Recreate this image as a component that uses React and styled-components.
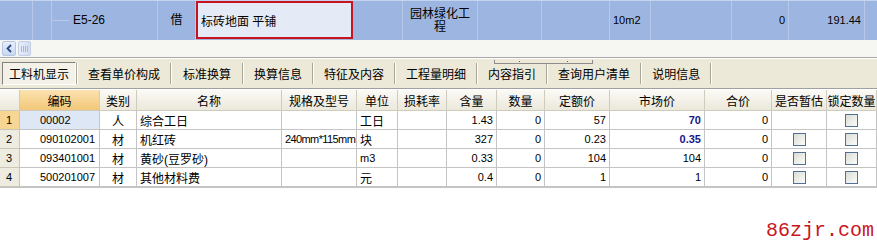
import React from 'react';
import styled, { createGlobalStyle } from 'styled-components';

const GlobalStyle = createGlobalStyle`
  html, body { margin: 0; padding: 0; background: #fff; }
  body { font-family: "Liberation Sans", "Noto Sans CJK SC", sans-serif; font-size: 12px; color: #000; }
`;

const Page = styled.div`
  width: 877px;
  height: 246px;
  display: flex;
  flex-direction: column;
  overflow: hidden;
  background: #fff;
`;

// ---------- upper grid row ----------
const TopRow = styled.div`
  display: grid;
  grid-template-columns: 33px 19px 106px 38px 157px 50px 75px 64px 68px 41px 81px 57px 76px 13px;
  height: 40px;
  background: #9db6e1;
  border-top: 1px solid #c4d3ee;
  box-sizing: border-box;
`;

const TopCell = styled.div`
  border-right: 1px solid #b7c8e8;
  display: flex;
  align-items: center;
  justify-content: ${p => p.$align || 'flex-start'};
  padding: 0 ${p => p.$pad ?? 3}px;
  font-size: ${p => (p.$num ? '11px' : '12px')};
  text-align: center;
  line-height: 13px;
  overflow: hidden;
`;

const TreeLine = styled.span`
  width: 17px;
  height: 1px;
  background: #b9c9e6;
  margin-right: 4px;
`;

const EditCell = styled.div`
  border: 2px solid #c8141e;
  background: #e4ebf7;
  display: flex;
  align-items: center;
  padding: 0 3px;
  font-size: 12px;
  box-sizing: border-box;
  margin: 0 0 1px 0;
`;

const ScrollRow = styled.div`
  height: 17px;
  background: #f6f6f2;
  display: flex;
  align-items: center;
  gap: 2px;
  padding-left: 2px;
  border-bottom: 1px solid #a9a9a9;
`;

const ScrollBtn = styled.div`
  width: 14px;
  height: 15px;
  box-sizing: border-box;
  border: 1px solid #b7c6e4;
  border-radius: 2px;
  background: linear-gradient(#e7eefb, #c9d8f3);
  display: flex;
  align-items: center;
  justify-content: center;
`;

const Grip = styled.div`
  width: 13px;
  height: 15px;
  box-sizing: border-box;
  border: 1px solid #c3cfe6;
  border-radius: 2px;
  background: linear-gradient(90deg, #e6ecf8, #d3ddf2);
  display: flex;
  align-items: center;
  justify-content: center;
  gap: 1px;
  & > i { width: 1px; height: 6px; background: #a9b8d6; }
`;

// ---------- tabs ----------
const TabBar = styled.div`
  height: 29px;
  background: #ece9d8;
  display: flex;
  align-items: center;
  padding-left: 2px;
  border-top: 1px solid #fff;
  border-bottom: 1px solid #a0a0a0;
  position: relative;
`;

const Tab = styled.div`
  height: 23px;
  box-sizing: border-box;
  display: flex;
  align-items: center;
  padding: 0 ${p => p.$pad}px;
  font-size: 12px;
  ${p => p.$active && `
    border-top: 1px solid #808080;
    border-left: 1px solid #808080;
    border-bottom: 1px solid #fff;
    border-right: 1px solid #fff;
    background: #f4f2e8;
  `}
`;

const TabSep = styled.div`
  width: 1px;
  height: 21px;
  background: #a7a59a;
  border-right: 1px solid #fff;
`;

const Splitter = styled.div`
  position: absolute;
  left: 494px;
  top: 1px;
  width: 99px;
  height: 4px;
  border: 1px solid #8d8d8d;
  border-top: none;
  box-sizing: border-box;
  display: flex;
  justify-content: space-around;
  align-items: center;
  & > i { width: 1px; height: 1px; background: #555; }
`;

// ---------- lower grid ----------
const COLS = '20px 80px 37px 145px 75px 41px 49px 50px 48px 65px 95px 67px 55px 50px';

const Table = styled.div`
  margin-top: 1px;
  display: grid;
  grid-template-columns: ${COLS};
  grid-auto-rows: 19px;
  grid-template-rows: 21px;
  border-bottom: 1px solid #c4c4c4;
`;

const Head = styled.div`
  background: ${p => (p.$hot ? 'linear-gradient(#fbe3b0, #f3c779)' : 'linear-gradient(#fbfaf6, #ebe8db)')};
  border-right: 1px solid #cfccbd;
  border-bottom: 1px solid #cfccbd;
  display: flex;
  align-items: center;
  justify-content: center;
  font-size: 12px;
  white-space: nowrap;
  overflow: hidden;
`;

const RowNum = styled.div`
  background: ${p => (p.$hot ? '#f7d592' : '#eeece1')};
  border-right: 1px solid #c9c6b7;
  border-bottom: 1px solid #c9c6b7;
  display: flex;
  align-items: center;
  padding-left: 6px;
  font-size: 11px;
`;

const Cell = styled.div`
  background: ${p => p.$bg || '#fff'};
  border-right: 1px solid #c4c4c4;
  border-bottom: 1px solid #c4c4c4;
  display: flex;
  align-items: center;
  justify-content: ${p => p.$align || 'flex-start'};
  padding: 0 ${p => p.$pad ?? 3}px;
  font-size: ${p => (p.$num ? '11px' : '12px')};
  letter-spacing: ${p => (p.$tight ? '-0.6px' : 'normal')};
  font-weight: ${p => (p.$bold ? 'bold' : 'normal')};
  color: ${p => (p.$bold ? '#15158a' : '#000')};
  white-space: nowrap;
  overflow: hidden;
`;

const Check = styled.span`
  width: 13px;
  height: 13px;
  box-sizing: border-box;
  border: 1px solid #4f7196;
  background: linear-gradient(135deg, #dcdcd6, #fbfbf9);
`;

const Footer = styled.div`
  margin-top: auto;
  display: flex;
  justify-content: flex-end;
  padding: 0 3px 4px 0;
`;

const Mark = styled.span`
  font-family: "Liberation Mono", "DejaVu Sans Mono", monospace;
  font-size: 20px;
  line-height: 22px;
  color: #c8161e;
`;

const tabs = [
  ['工料机显示', 6], ['查看单价构成', 10], ['标准换算', 11], ['换算信息', 10], ['特征及内容', 10],
  ['工程量明细', 10], ['内容指引', 10], ['查询用户清单', 10], ['说明信息', 10],
];

const heads = ['', '编码', '类别', '名称', '规格及型号', '单位', '损耗率', '含量', '数量', '定额价', '市场价', '合价', '是否暂估', '锁定数量'];

const rows = [
  { code: '00002', type: '人', name: '综合工日', spec: '', unit: '工日', qty: '1.43', price: '57', market: '70', bold: true, est: false },
  { code: '090102001', type: '材', name: '机红砖', spec: '240mm*115mm', unit: '块', qty: '327', price: '0.23', market: '0.35', bold: true, est: true },
  { code: '093401001', type: '材', name: '黄砂(豆罗砂)', spec: '', unit: 'm3', qty: '0.33', price: '104', market: '104', est: true },
  { code: '500201007', type: '材', name: '其他材料费', spec: '', unit: '元', qty: '0.4', price: '1', market: '1', est: true },
];

export default function App() {
  return (
    <Page>
      <GlobalStyle />
      <TopRow>
        <TopCell />
        <TopCell />
        <TopCell $pad={0}><TreeLine />E5-26</TopCell>
        <TopCell $align="center">借</TopCell>
        <EditCell>标砖地面 平铺</EditCell>
        <TopCell />
        <TopCell $align="center">园林绿化工<br />程</TopCell>
        <TopCell />
        <TopCell />
        <TopCell $num>10m2</TopCell>
        <TopCell />
        <TopCell $num $align="flex-end">0</TopCell>
        <TopCell $num $align="flex-end">191.44</TopCell>
        <TopCell />
      </TopRow>
      <ScrollRow>
        <ScrollBtn>
          <svg width="8" height="9" viewBox="0 0 8 9">
            <path d="M6 1 L2.5 4.5 L6 8" fill="none" stroke="#2c4a86" strokeWidth="1.8" />
          </svg>
        </ScrollBtn>
        <Grip><i /><i /><i /><i /></Grip>
      </ScrollRow>
      <TabBar>
        <Splitter><i /><i /></Splitter>
        {tabs.map(([t, pad], i) => (
          <React.Fragment key={t}>
            <Tab $active={i === 0} $pad={pad}>{t}</Tab>
            <TabSep />
          </React.Fragment>
        ))}
      </TabBar>
      <Table>
        {heads.map((h, i) => (
          <Head key={i} $hot={i === 1}>{h}</Head>
        ))}
        {rows.map((r, i) => (
          <React.Fragment key={r.code}>
            <RowNum $hot={i === 0}>{i + 1}</RowNum>
            <Cell $num $pad={20} $bg={i === 0 ? '#dde7f5' : undefined}>{r.code}</Cell>
            <Cell $align="center">{r.type}</Cell>
            <Cell>{r.name}</Cell>
            <Cell $num $tight>{r.spec}</Cell>
            <Cell $num={r.unit === 'm3'}>{r.unit}</Cell>
            <Cell />
            <Cell $num $align="flex-end">{r.qty}</Cell>
            <Cell $num $align="flex-end">0</Cell>
            <Cell $num $align="flex-end">{r.price}</Cell>
            <Cell $num $align="flex-end" $bold={r.bold}>{r.market}</Cell>
            <Cell $num $align="flex-end">0</Cell>
            <Cell $align="center">{r.est && <Check />}</Cell>
            <Cell $align="center"><Check /></Cell>
          </React.Fragment>
        ))}
      </Table>
      <Footer>
        <Mark>86zjr.com</Mark>
      </Footer>
    </Page>
  );
}
